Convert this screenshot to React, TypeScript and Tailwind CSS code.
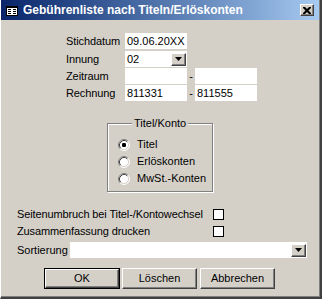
import React from "react";

const font = { fontFamily: '"Liberation Sans", Arial, sans-serif' };

function Radio({ checked }: { checked?: boolean }) {
  return (
    <svg width="12" height="12" viewBox="0 0 12 12" className="shrink-0">
      <circle cx="6" cy="6" r="5" fill="#ffffff" />
      <path d="M2.11 9.89 A5.5 5.5 0 0 1 9.89 2.11" fill="none" stroke="#808080" strokeWidth="1" />
      <path d="M9.89 2.11 A5.5 5.5 0 0 1 2.11 9.89" fill="none" stroke="#ffffff" strokeWidth="1" />
      <path d="M2.82 9.18 A4.5 4.5 0 0 1 9.18 2.82" fill="none" stroke="#404040" strokeWidth="1" />
      <path d="M9.18 2.82 A4.5 4.5 0 0 1 2.82 9.18" fill="none" stroke="#d4d0c8" strokeWidth="1" />
      {checked && <rect x="4" y="4" width="4" height="4" rx="1.2" fill="#000000" />}
    </svg>
  );
}

function ArrowBtn() {
  return (
    <div className="w-[15px] h-[13px] bg-[#d4d0c8] border-t border-l border-white border-r border-b border-r-[#404040] border-b-[#404040] shadow-[inset_-1px_-1px_0_#808080] flex items-center justify-center">
      <svg width="7" height="4" viewBox="0 0 7 4">
        <polygon points="0,0 7,0 3.5,4" fill="#000" />
      </svg>
    </div>
  );
}

function Btn({ label, def }: { label: string; def?: boolean }) {
  const inner = (
    <div className="w-full h-full bg-[#d4d0c8] border-t border-l border-white border-r border-b border-r-[#404040] border-b-[#404040] shadow-[inset_-1px_-1px_0_#808080] flex items-center justify-center text-[11px] text-black">
      {label}
    </div>
  );
  if (def) {
    return <div className="w-[76px] h-[21px] border border-black">{inner}</div>;
  }
  return <div className="w-[75px] h-[21px]">{inner}</div>;
}

function Row({ label, children, first }: { label: string; children: React.ReactNode; first?: string }) {
  return (
    <div className={`flex items-center h-[16px] ${first ?? ""}`}>
      <div className="w-[59px] text-[11px] leading-none tracking-[-0.1px]">{label}</div>
      {children}
    </div>
  );
}

export default function App() {
  return (
    <div
      className="w-[322px] h-[299px] bg-[#d4d0c8] flex flex-col border-l border-l-white border-r-2 border-r-[#404040] border-b-2 border-b-[#404040] shadow-[inset_-1px_-1px_0_#808080] overflow-hidden text-black"
      style={font}
    >
      {/* title bar */}
      <div className="w-[318px] h-[20px] bg-gradient-to-r from-[#0a246a] to-[#a6caf0] flex items-center pl-[5px] pr-[5px]">
        <svg width="12" height="10" viewBox="0 0 12 10" className="shrink-0 mt-[2px]">
          <rect x="0.5" y="0.5" width="11" height="9" fill="#fff" stroke="#000" />
          <rect x="0" y="0" width="12" height="2" fill="#000" />
          <rect x="2" y="3" width="3" height="1" fill="#000" />
          <rect x="7" y="3" width="3" height="1" fill="#000" />
          <rect x="2" y="5" width="3" height="1" fill="#000" />
          <rect x="7" y="5" width="3" height="1" fill="#000" />
          <rect x="2" y="7" width="3" height="1" fill="#000" />
          <rect x="7" y="7" width="3" height="1" fill="#000" />
        </svg>
        <div className="ml-[5px] text-white font-bold text-[12px] leading-none flex-1 whitespace-nowrap">
          Gebührenliste nach Titeln/Erlöskonten
        </div>
        <div className="w-[14px] h-[12px] bg-[#d4d0c8] border-t border-l border-white border-r border-b border-r-[#404040] border-b-[#404040] shadow-[inset_-1px_-1px_0_#808080] flex items-center justify-center">
          <svg width="8" height="7" viewBox="0 0 8 7">
            <path d="M0 0h2l2 2 2-2h2v1l-2.5 2.5L8 6v1H6L4 5 2 7H0V6l2.5-2.5L0 1z" fill="#000" />
          </svg>
        </div>
      </div>

      {/* fields */}
      <div className="ml-[65px] mt-[13px] flex flex-col">
        <Row label="Stichdatum">
          <div className="w-[62px] h-[16px] bg-white text-[11px] leading-[16px] pl-[2px] whitespace-nowrap">09.06.20XX</div>
        </Row>
        <Row label="Innung" first="mt-[2px]">
          <div className="w-[62px] h-[16px] bg-white text-[11px] leading-[16px] pl-[2px] flex items-center justify-between pr-[1px]">
            <span>02</span>
            <ArrowBtn />
          </div>
        </Row>
        <Row label="Zeitraum" first="mt-[1px]">
          <div className="w-[62px] h-[16px] bg-white" />
          <div className="w-[8px] text-center text-[11px] leading-none">-</div>
          <div className="w-[62px] h-[16px] bg-white" />
        </Row>
        <Row label="Rechnung" first="mt-[1px]">
          <div className="w-[62px] h-[16px] bg-white text-[11px] leading-[16px] pl-[2px]">811331</div>
          <div className="w-[8px] text-center text-[11px] leading-none">-</div>
          <div className="w-[62px] h-[16px] bg-white text-[11px] leading-[16px] pl-[2px]">811555</div>
        </Row>
      </div>

      {/* group box */}
      <div className="ml-[106px] mt-[22px] relative w-[106px] h-[69px] border border-[#808080] shadow-[inset_1px_1px_0_#fff,1px_1px_0_#fff] pt-[12px] pl-[10px]">
        <div className="absolute left-[24px] top-[-7px] bg-[#d4d0c8] px-[2px] text-[11px] leading-[12px]">Titel/Konto</div>
        <div className="flex items-center h-[17px] gap-[7px] text-[11px]">
          <Radio checked />
          <span>Titel</span>
        </div>
        <div className="flex items-center h-[17px] gap-[7px] text-[11px]">
          <Radio />
          <span>Erlöskonten</span>
        </div>
        <div className="flex items-center h-[17px] gap-[7px] text-[11px]">
          <Radio />
          <span>MwSt.-Konten</span>
        </div>
      </div>

      {/* checkboxes */}
      <div className="ml-[16px] mt-[14px] flex flex-col">
        <div className="flex items-center h-[17px]">
          <div className="w-[196px] text-[11px] whitespace-nowrap tracking-[-0.12px]">Seitenumbruch bei Titel-/Kontowechsel</div>
          <div className="w-[11px] h-[11px] bg-white border border-black" />
        </div>
        <div className="flex items-center h-[17px]">
          <div className="w-[196px] text-[11px] whitespace-nowrap tracking-[-0.12px]">Zusammenfassung drucken</div>
          <div className="w-[11px] h-[11px] bg-white border border-black" />
        </div>
        <div className="flex items-center h-[16px] mt-[2px]">
          <div className="w-[53px] text-[11px] whitespace-nowrap">Sortierung</div>
          <div className="w-[237px] h-[16px] bg-white flex items-center justify-end pr-[1px]">
            <ArrowBtn />
          </div>
        </div>
      </div>

      {/* buttons */}
      <div className="ml-[43px] mt-[10px] flex gap-[2px]">
        <Btn label="OK" def />
        <div className="mr-[1px]">
          <Btn label="Löschen" />
        </div>
        <Btn label="Abbrechen" />
      </div>
    </div>
  );
}
